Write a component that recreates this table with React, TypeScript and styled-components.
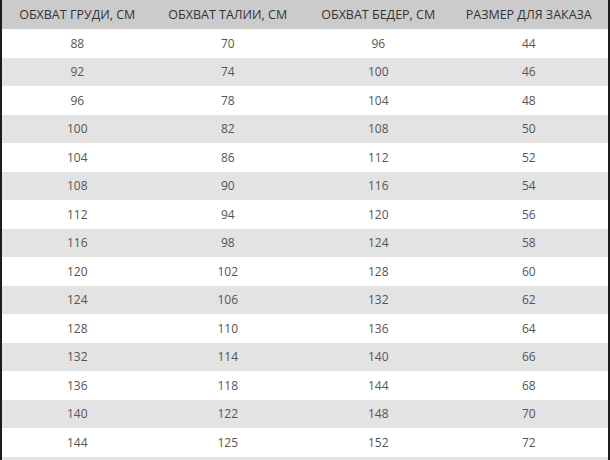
import React from "react"
import styled, { createGlobalStyle } from "styled-components"

const rows: [number, number, number, number][] = [
  [88, 70, 96, 44],
  [92, 74, 100, 46],
  [96, 78, 104, 48],
  [100, 82, 108, 50],
  [104, 86, 112, 52],
  [108, 90, 116, 54],
  [112, 94, 120, 56],
  [116, 98, 124, 58],
  [120, 102, 128, 60],
  [124, 106, 132, 62],
  [128, 110, 136, 64],
  [132, 114, 140, 66],
  [136, 118, 144, 68],
  [140, 122, 148, 70],
  [144, 125, 152, 72],
]

const headers = ["Обхват груди, см", "Обхват талии, см", "Обхват бедер, см", "Размер для заказа"]

function App() {
  return (
    <>
      <GlobalStyle />
      <Wrap>
        <HeadRow>
          {headers.map((h) => (
            <HeadCell key={h}>{h}</HeadCell>
          ))}
        </HeadRow>
        {rows.map((r, i) => (
          <Row key={r[0]} $striped={i % 2 === 1}>
            {r.map((v, j) => (
              <Cell key={j}>{v}</Cell>
            ))}
          </Row>
        ))}
        <Row $striped={true} />
      </Wrap>
    </>
  )
}

export default App

const GlobalStyle = createGlobalStyle`
  html, body {
    margin: 0;
    padding: 0;
    background: #ffffff;
    overflow: hidden;
  }
`

const Wrap = styled.div`
  width: 606px;
  height: 460px;
  overflow: hidden;
  border-left: 2px solid #1c1c1c;
  border-right: 2px solid #1c1c1c;
  font-family: "Open Sans", "Liberation Sans", sans-serif;
`

const HeadRow = styled.div`
  display: grid;
  grid-template-columns: repeat(4, 150.5px);
  height: 29px;
  background-color: #cbcbcb;
  padding-right: 4px;
`

const HeadCell = styled.div`
  display: flex;
  justify-content: center;
  align-items: center;
  font-size: 12.5px;
  color: #333333;
  text-transform: uppercase;
  white-space: nowrap;
`

const Row = styled.div<{ $striped: boolean }>`
  display: grid;
  grid-template-columns: repeat(4, 150.5px);
  height: 28.5px;
  padding-right: 4px;
  background-color: ${(p) => (p.$striped ? "#e3e3e3" : "#ffffff")};
`

const Cell = styled.div`
  display: flex;
  justify-content: center;
  align-items: center;
  font-size: 12px;
  color: #555555;
`
